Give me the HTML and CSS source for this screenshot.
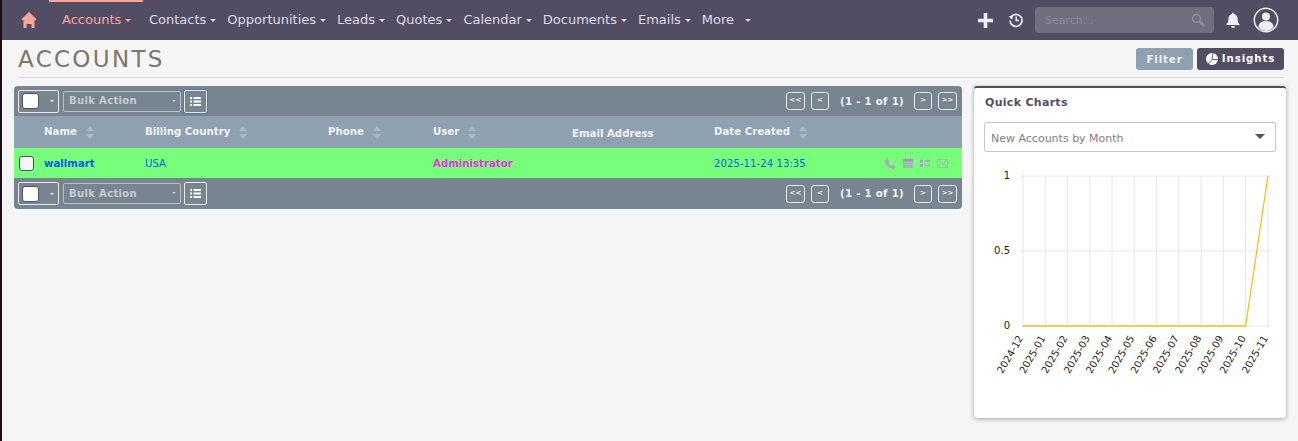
FILE: index.html
```html
<!DOCTYPE html>
<html lang="en">
<head>
<meta charset="utf-8">
<title>Accounts</title>
<link rel="stylesheet" href="styles.css">
</head>
<body>
<div class="app">
  <header class="topnav">
    <a class="home"><svg width="16" height="16" viewBox="0 0 16 16"><path fill="#f8a59b" d="M8 0 15.500 7.200 14.700 8.300H13.500V16H10.500V12H5.500V16H2.500V8.300H1.300L.5 7.200Z"/></svg></a>
    <nav class="menu">
      <a class="item active">Accounts<i class="caret"></i></a>
      <a class="item">Contacts<i class="caret"></i></a>
      <a class="item">Opportunities<i class="caret"></i></a>
      <a class="item">Leads<i class="caret"></i></a>
      <a class="item">Quotes<i class="caret"></i></a>
      <a class="item">Calendar<i class="caret"></i></a>
      <a class="item">Documents<i class="caret"></i></a>
      <a class="item">Emails<i class="caret"></i></a>
      <a class="item more">More<i class="caret"></i></a>
    </nav>
    <div class="tools">
      <svg class="plus" width="15" height="15" viewBox="0 0 15 15"><path fill="#f0eef2" d="M5.700 0h3.600v5.700H15v3.600H9.300V15H5.700V9.300H0V5.700h5.700z"/></svg>
      <svg class="history" width="16" height="16" viewBox="0 0 16 16"><path fill="none" stroke="#f0eef2" stroke-width="1.700" d="M2.900 5.200A6 6 0 1 1 2 8.500"/><path fill="#f0eef2" d="M.6 4.200 5 3.400 4.200 7.800z"/><path fill="none" stroke="#f0eef2" stroke-width="1.500" d="M8.200 4.600V8.400H11"/></svg>
      <div class="search"><span>Search...</span><svg width="14" height="14" viewBox="0 0 14 14"><circle cx="5.500" cy="5.500" r="4" fill="none" stroke="#938e9e" stroke-width="1.300"/><path stroke="#938e9e" stroke-width="2.400" d="M8.500 8.500l4.500 4.500"/></svg></div>
      <svg class="bell" width="16" height="16" viewBox="0 0 16 16"><path fill="#f0eef2" d="M8 .8a1.200 1.200 0 0 1 1.200 1.300C11.400 2.700 12.600 4.500 12.600 7c0 3 .8 4 2 5.200v.8H1.400v-.8c1.200-1.200 2-2.200 2-5.200 0-2.500 1.200-4.300 3.400-4.900A1.200 1.200 0 0 1 8 .8zM6 14h4a2 2 0 0 1-4 0z"/></svg>
      <svg class="user" width="26" height="26" viewBox="0 0 26 26"><circle cx="13" cy="13" r="11.700" fill="none" stroke="#f0eef2" stroke-width="1.500"/><circle cx="13" cy="9.500" r="4" fill="#f0eef2"/><path fill="#f0eef2" d="M5.500 20.500c0-4.500 3-6.500 7.500-6.500s7.500 2 7.500 6.500A11 11 0 0 1 13 24a11 11 0 0 1-7.500-3.500z"/></svg>
    </div>
  </header>

  <div class="titlebar">
    <h1>ACCOUNTS</h1>
    <div class="actions">
      <button class="btn filter">Filter</button>
      <button class="btn insights"><svg width="12" height="12" viewBox="0 0 12 12"><circle cx="6" cy="6" r="6" fill="#fff"/><path fill="none" stroke="#534d64" stroke-width=".9" d="M7 0 6 6.500H12M6 6.500 2 11"/></svg><span class="lift">Insights</span></button>
    </div>
  </div>

  <main class="content">
    <section class="list">
      <div class="pager-bar">
        <span class="selector"><i class="check"></i><i class="caret"></i></span>
        <span class="bulk"><b>Bulk Action</b><i class="caret"></i></span>
        <span class="listbtn focus"><svg width="11" height="9" viewBox="0 0 11 9"><path fill="#fff" d="M0 0h2v2H0zM3.500 0H11v2H3.500zM0 3.500h2v2H0zM3.500 3.500H11v2H3.500zM0 7h2v2H0zM3.500 7H11v2H3.500z"/></svg></span>
        <div class="pages">
          <span class="pg wide">&lt;&lt;</span><span class="pg">&lt;</span>
          <span class="count">(1 - 1 of 1)</span>
          <span class="pg">&gt;</span><span class="pg wide">&gt;&gt;</span>
        </div>
      </div>
      <div class="grid heads">
        <span></span>
        <span class="th">Name<i class="sort"></i></span>
        <span class="th">Billing Country<i class="sort"></i></span>
        <span class="th">Phone<i class="sort"></i></span>
        <span class="th">User<i class="sort"></i></span>
        <span class="th low">Email Address</span>
        <span class="th">Date Created<i class="sort"></i></span>
      </div>
      <div class="grid row">
        <span class="rowcheck"><i></i></span>
        <a class="name">wallmart</a>
        <span>USA</span>
        <span></span>
        <a class="owner">Administrator</a>
        <span></span>
        <span>2025-11-24 13:35</span>
        <span class="rowicons">
          <svg width="11" height="11" viewBox="0 0 12 12"><path fill="#b39bd0" d="M2.500.3 4.500 3.400 3.400 4.800C4 6.200 5.400 7.800 7 8.600l1.400-1 3 2c-.3 1.500-1.300 2.200-2.700 2.200C4.500 11.500.4 7.200.3 3.200.3 1.800 1.200.8 2.500.3z"/></svg>
          <svg width="10" height="10" viewBox="0 0 10 10"><path fill="#a3afb6" d="M0 1h10v9H0z"/><path fill="#9f93bf" d="M2 0h1v2H2zM7 0h1v2H7zM0 1h10v2H0z"/><path fill="#8bd69a" d="M1 4h8v.7H1zM1 6.300h8V7H1zM3.300 4v5H4V4zM6 4v5h.7V4z"/></svg>
          <svg width="10" height="10" viewBox="0 0 10 10"><path fill="#b39bd0" d="M0 1.500h3v3H0zM0 6h3v3H0zM4.500 2.300H10v1.400H4.500zM4.500 6.800H10v1.400H4.500z"/></svg>
          <svg width="11" height="9" viewBox="0 0 11 9"><path fill="none" stroke="#a9b9b8" d="M.5.5h10v8H.5zM.5.5 5.500 5 10.500.5M.5 8.500 4 4M10.500 8.500 7 4"/></svg>
        </span>
      </div>
      <div class="pager-bar bottom">
        <span class="selector"><i class="check"></i><i class="caret"></i></span>
        <span class="bulk"><b>Bulk Action</b><i class="caret"></i></span>
        <span class="listbtn"><svg width="11" height="9" viewBox="0 0 11 9"><path fill="#fff" d="M0 0h2v2H0zM3.500 0H11v2H3.500zM0 3.500h2v2H0zM3.500 3.500H11v2H3.500zM0 7h2v2H0zM3.500 7H11v2H3.500z"/></svg></span>
        <div class="pages">
          <span class="pg wide">&lt;&lt;</span><span class="pg">&lt;</span>
          <span class="count">(1 - 1 of 1)</span>
          <span class="pg">&gt;</span><span class="pg wide">&gt;&gt;</span>
        </div>
      </div>
    </section>

    <aside class="charts">
      <h2>Quick Charts</h2>
      <div class="select"><span>New Accounts by Month</span><i></i></div>
      <svg class="chart" width="302" height="240" viewBox="0 0 302 240">
        <g class="gridlines">
          <path d="M39 6V158M61.300 6V158M83.500 6V158M105.800 6V158M128 6V158M150.300 6V158M172.600 6V158M194.800 6V158M217.100 6V158M239.300 6V158M261.600 6V158M283.900 6V158"/>
          <path d="M37 6H287M37 81H287M37 156H287"/>
        </g>
        <g class="ylab">
          <text x="26" y="9">1</text>
          <text x="26" y="84">0.5</text>
          <text x="26" y="159">0</text>
        </g>
        <g class="xlab">
          <text transform="translate(39.500 168) rotate(-60)">2024-12</text>
          <text transform="translate(61.800 168) rotate(-60)">2025-01</text>
          <text transform="translate(84 168) rotate(-60)">2025-02</text>
          <text transform="translate(106.300 168) rotate(-60)">2025-03</text>
          <text transform="translate(128.500 168) rotate(-60)">2025-04</text>
          <text transform="translate(150.800 168) rotate(-60)">2025-05</text>
          <text transform="translate(173.100 168) rotate(-60)">2025-06</text>
          <text transform="translate(195.300 168) rotate(-60)">2025-07</text>
          <text transform="translate(217.600 168) rotate(-60)">2025-08</text>
          <text transform="translate(239.800 168) rotate(-60)">2025-09</text>
          <text transform="translate(262.100 168) rotate(-60)">2025-10</text>
          <text transform="translate(284.400 168) rotate(-60)">2025-11</text>
        </g>
        <path class="line" d="M39 156H261.600L283.900 6"/>
      </svg>
    </aside>
  </main>
</div>
</body>
</html>
```
FILE: styles.css
```css
* { box-sizing: border-box; }
html, body { margin: 0; padding: 0; height: 100%; overflow: hidden; }
body {
  background: #f5f5f5;
  font-family: "DejaVu Sans", sans-serif;
  font-size: 10.200px;
  color: #534d64;
}
i { font-style: normal; }
.app { height: 441px; border-left: 2px solid #1c1018; }

.topnav { height: 40px; background: #534d64; display: flex; align-items: center; position: relative; }
.home { margin-left: 19px; width: 16px; height: 16px; margin-top: -1px; }
.home svg { display: block; }
.menu { display: flex; margin-left: 12px; height: 40px; }
.item { color: #dcdce8; font-size: 13px; line-height: 40px; padding: 0 5px 0 6px; white-space: nowrap; }
.item.active { color: #f8a59b; position: relative; width: 94px; padding: 0 0 0 13px; }
.item.active::before { content: ""; position: absolute; left: 0; right: 0; top: 0; height: 2px; background: #f8a59b; }
.item .caret { margin-left: 4px; border-top-color: currentColor; }
.item.more .caret { margin-left: 11px; }
.caret { display: inline-block; width: 0; height: 0; border: 3px solid transparent; border-top-color: #fff; border-bottom: 0; vertical-align: middle; }
.tools { margin-left: auto; display: flex; align-items: center; margin-right: 19px; }
.plus { margin-right: 15px; }
.history { margin-right: 11px; }
.search { width: 179px; height: 26px; border-radius: 4px; background: #736d80; display: flex; align-items: center; justify-content: space-between; padding: 0 9px 0 10px; color: #8f8a9c; font-size: 11px; margin-right: 11px; }
.bell { margin-right: 12px; }

.titlebar { margin: 0 14px 0 16px; height: 38px; border-bottom: 1px solid #ddd; display: flex; justify-content: space-between; align-items: flex-start; }
h1 { margin: 6px 0 0 0; font-size: 23px; line-height: 26px; font-weight: 400; letter-spacing: 2.300px; color: #7b7670; }
.actions { display: flex; gap: 4px; margin-top: 8px; }
.btn { height: 22px; border: 0; border-radius: 3px; color: #fff; font: bold 10.200px "DejaVu Sans", sans-serif; letter-spacing: .9px; padding: 0; display: flex; align-items: center; justify-content: center; }
.filter { width: 57px; background: #8fa1b0; color: #f2f2f2; }
.insights { width: 87px; background: #534d64; gap: 4px; }
.lift { margin-top: -2px; }

.content { display: flex; align-items: flex-start; padding: 8px 0 0 12px; }
.list { width: 948px; border-radius: 4px; overflow: hidden; background: #778591; }
.pager-bar { height: 30px; display: flex; align-items: center; padding: 0 5px 0 4px; }
.pager-bar.bottom { height: 31px; }
.selector { width: 41px; height: 23px; border: 1px solid #e8e8e8; border-radius: 2px; display: flex; align-items: center; padding-left: 3px; gap: 11px; }
.selector .caret { border-width: 2px; border-bottom: 0; }
.check { width: 17px; height: 16px; background: #fff; border: 1px solid #534d64; border-radius: 3px; }
.bulk { width: 118px; height: 21px; margin-left: 4px; border: 1px solid #b9c0c6; border-radius: 2px; display: flex; align-items: center; justify-content: space-between; padding: 0 4px 1px 5px; color: #c6ccd2; letter-spacing: .35px; font-size: 10px; }
.bulk .caret { border-top-color: #c6ccd2; border-width: 2px; border-bottom: 0; }
.listbtn { width: 23px; height: 23px; margin-left: 3px; border: 1px solid #e8e8e8; border-radius: 2px; display: flex; align-items: center; justify-content: center; }
.listbtn.focus { box-shadow: 0 0 0 1px #4d7cae; }
.pages { margin-left: auto; display: flex; align-items: center; color: #f2f2f2; font-weight: 700; }
.pg { width: 18px; height: 18px; margin-left: 6px; border: 1px solid #e8e8e8; border-radius: 3px; font-size: 7px; line-height: 15px; text-align: center; }
.pg.wide { width: 19px; }
.count { letter-spacing: .3px; margin: 0 4px 0 11px; }

.grid { display: grid; grid-template-columns: 30px 101px 183px 105px 139px 142px 1fr auto; align-items: center; }
.heads { height: 32px; background: #8fa1b0; color: #f2f2f2; }
.th { font-weight: 700; display: flex; align-items: center; margin-top: -2px; }
.th.low { margin-top: 2px; }
.sort { margin-left: 9px; margin-top: 2px; width: 8px; height: 13px; position: relative; display: inline-block; }
.sort::before, .sort::after { content: ""; position: absolute; left: 0; border: 4px solid transparent; }
.sort::before { top: 0; border-top: 0; border-bottom: 5px solid #aeb9c3; }
.sort::after { bottom: 0; border-bottom: 0; border-top: 5px solid #aeb9c3; }
.row { height: 30px; background: #77ff7b; color: #1360e6; }
.rowcheck { display: flex; padding-left: 5px; }
.rowcheck i { width: 15px; height: 15px; background: #f5f5f5; border: 1px solid #534d64; border-radius: 3px; }
.name { font-weight: 700; color: #0f56ea; }
.owner { font-weight: 700; color: #ee2ee6; }
.rowicons { display: flex; align-items: center; gap: 7px; padding-right: 14px; }

.charts { width: 312px; height: 332px; margin-left: 12px; background: #fff; border-top: 2px solid #534d64; border-radius: 3px; box-shadow: 0 1px 4px rgba(0,0,0,.35); padding: 0 10px; }
h2 { margin: 8px 0 0 1px; font-size: 11px; line-height: 13px; font-weight: 700; letter-spacing: .3px; color: #534d64; }
.select { height: 30px; margin-top: 13px; border: 1px solid #bcc8d2; border-radius: 3px; display: flex; align-items: center; justify-content: space-between; padding: 2px 10px 0 6px; color: #857e7a; font-size: 11px; }
.select i { border: 5px solid transparent; border-top: 5px solid #555; border-bottom: 0; margin-top: -3px; }
.chart { display: block; margin-top: 18px; overflow: visible; font-size: 10px; fill: #222; }
.gridlines path { fill: none; stroke: #e6e6e6; stroke-width: 1; }
.ylab text { text-anchor: end; }
.xlab text { text-anchor: end; }
.line { fill: none; stroke: #f5c21b; stroke-width: 1.300; }
```
